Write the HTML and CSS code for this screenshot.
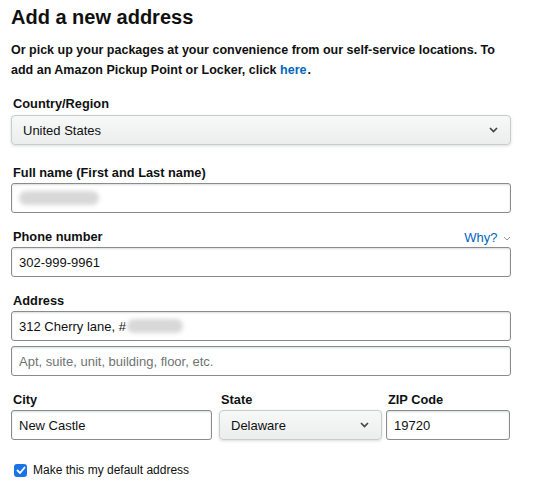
FILE: index.html
```html
<!DOCTYPE html>
<html lang="en">

<head>
    <meta charset="UTF-8">
    <meta name="viewport" content="width=device-width, initial-scale=1.0">
    <title>Add a new address</title>
    <link rel="stylesheet" href="styles.css">
</head>

<body>

    <div class="page">
        <h1>Add a new address</h1>
        <p class="intro">Or pick up your packages at your convenience from our self-service locations. To<br>add an Amazon Pickup Point or Locker, click <a href="#">here</a>.</p>

        <div class="field first">
            <label>Country/Region</label>
            <div class="select">
                <span>United States</span>
                <svg class="caret" width="9" height="6" viewBox="0 0 9 6"><path d="M1 1l3.5 3.5L8 1" fill="none" stroke="#444" stroke-width="1.7"/></svg>
            </div>
        </div>

        <div class="field">
            <label>Full name (First and Last name)</label>
            <div class="input"><span class="blur wide"></span></div>
        </div>

        <div class="field">
            <div class="label-row">
                <label>Phone number</label>
                <a href="#" class="why">Why? <svg width="8" height="5" viewBox="0 0 8 5"><path d="M1 1l3 3 3-3" fill="none" stroke="#999" stroke-width="1"/></svg></a>
            </div>
            <div class="input">302-999-9961</div>
        </div>

        <div class="field">
            <label>Address</label>
            <div class="input">312 Cherry lane, #<span class="blur short"></span></div>
            <div class="input placeholder">Apt, suite, unit, building, floor, etc.</div>
        </div>

        <div class="row">
            <div class="field city">
                <label>City</label>
                <div class="input">New Castle</div>
            </div>
            <div class="field state">
                <label>State</label>
                <div class="select">
                    <span>Delaware</span>
                    <svg class="caret" width="9" height="6" viewBox="0 0 9 6"><path d="M1 1l3.5 3.5L8 1" fill="none" stroke="#444" stroke-width="1.7"/></svg>
                </div>
            </div>
            <div class="field zip">
                <label>ZIP Code</label>
                <div class="input">19720</div>
            </div>
        </div>

        <div class="check">
            <span class="box"><svg width="10" height="8" viewBox="0 0 10 8"><path d="M1 4l3 3 5-6" fill="none" stroke="#fff" stroke-width="1.8"/></svg></span>
            <span>Make this my default address</span>
        </div>
    </div>

</body>

</html>
```

FILE: styles.css
```css
body {
    margin: 0;
    padding: 0;
    background-color: #fff;
    color: #0f1111;
    font-family: "Liberation Sans", Arial, sans-serif;
}

.page {
    width: 500px;
    padding: 3px 0 0 11px;
}

h1 {
    margin: 0;
    font-size: 20px;
    line-height: 28px;
    font-weight: 700;
}

.intro {
    margin: 9px 0 15px;
    font-size: 12.5px;
    line-height: 20px;
    font-weight: 700;
}

.intro a {
    color: #0066c0;
    text-decoration: none;
    margin-right: 1px;
}

.field {
    margin-bottom: 15px;
}

.field.first {
    margin-bottom: 19px;
}

.field.first .select {
    margin-top: 2px;
}

label {
    display: block;
    font-size: 12.8px;
    font-weight: 700;
    line-height: 18px;
    margin-bottom: 1px;
    padding-left: 2px;
}

.label-row {
    display: flex;
    justify-content: space-between;
    align-items: center;
}

.why {
    color: #0066c0;
    text-decoration: none;
    font-size: 13px;
    margin-bottom: 1px;
}

.why svg {
    margin-left: 2px;
    vertical-align: middle;
}

.input {
    box-sizing: border-box;
    height: 30px;
    border: 1px solid #888c8c;
    border-radius: 3px;
    box-shadow: 0 1px 2px rgba(15, 17, 17, 0.15) inset;
    padding: 0 7px;
    display: flex;
    align-items: center;
    font-size: 13px;
    margin-bottom: 5px;
}

.input.placeholder {
    color: #6f7373;
}

.select {
    box-sizing: border-box;
    height: 30px;
    border: 1px solid #c9cccc;
    border-radius: 4px;
    background: linear-gradient(#f7f8f8, #eceeee);
    box-shadow: 0 1px 3px rgba(15, 17, 17, 0.15);
    padding: 0 12px 0 11px;
    display: flex;
    align-items: center;
    justify-content: space-between;
    font-size: 13px;
}

.blur {
    display: inline-block;
    height: 14px;
    background: #d8d8d8;
    border-radius: 7px;
    filter: blur(2px);
}

.blur.wide {
    width: 80px;
}

.blur.short {
    width: 56px;
    margin-left: 1px;
}

.row {
    display: flex;
    gap: 7px;
    margin-top: 8px;
}

.row .field {
    margin-bottom: 0;
}

.row .input {
    margin-bottom: 0;
}

.city {
    width: 201px;
}

.state {
    width: 163px;
}

.zip {
    width: 124px;
    margin-left: -3px;
}

.check {
    display: flex;
    align-items: center;
    font-size: 12px;
    margin: 23px 0 0 3px;
}

.box {
    width: 13px;
    height: 13px;
    border-radius: 3px;
    background: #1b73e8;
    display: flex;
    align-items: center;
    justify-content: center;
    margin-right: 6px;
}
```
